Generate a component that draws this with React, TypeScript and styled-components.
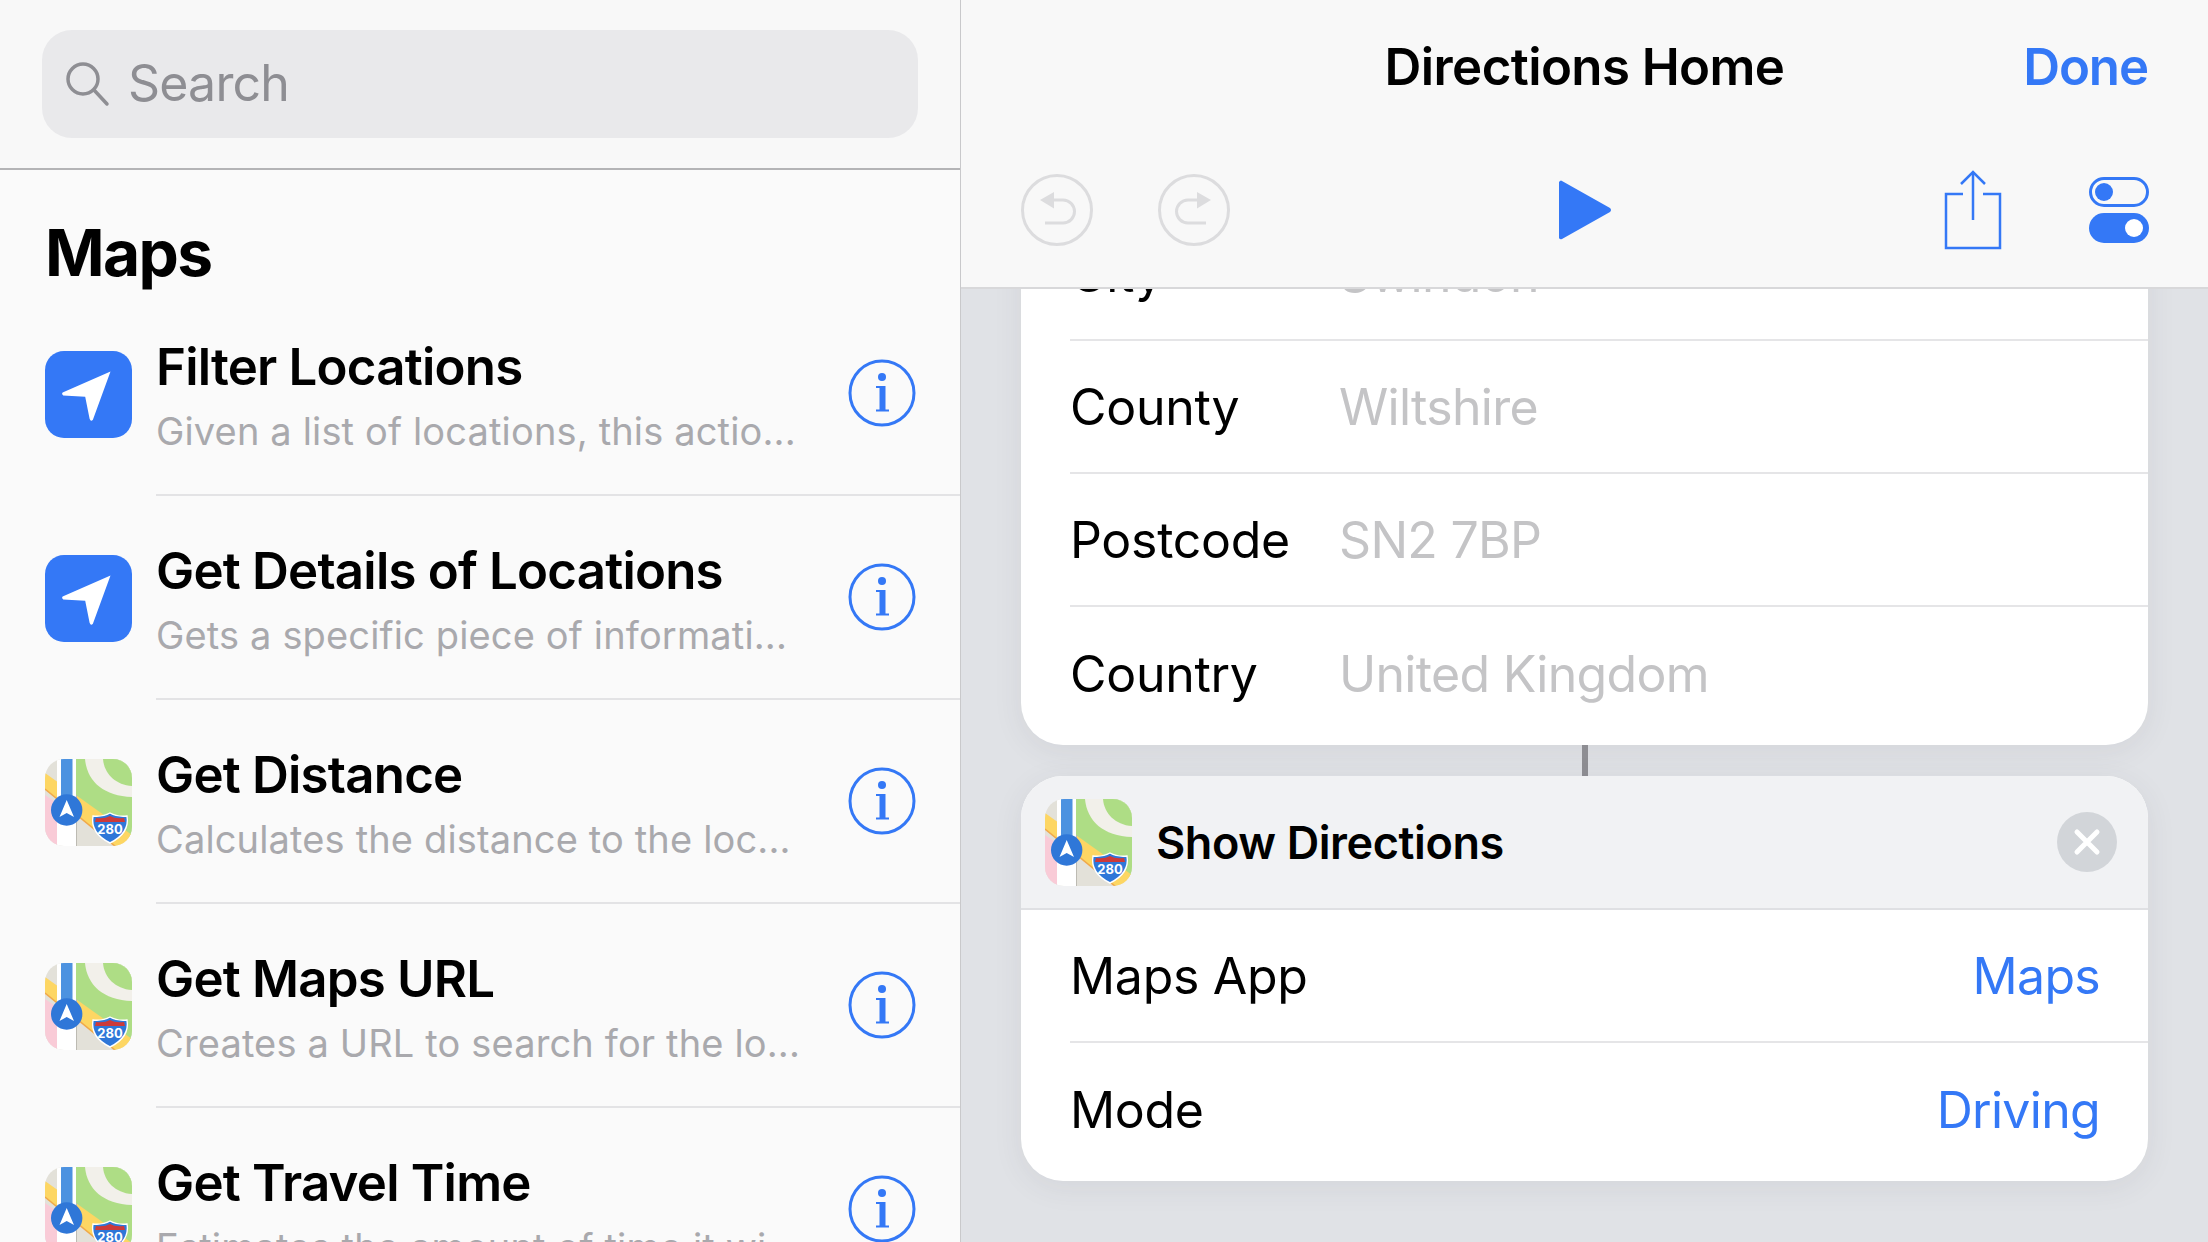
import React from 'react';
import styled, { createGlobalStyle } from 'styled-components';

const GlobalStyle = createGlobalStyle`
    html, body {
        margin: 0;
        padding: 0;
        background: #e0e2e6;
    }
    * {
        box-sizing: border-box;
    }
`;

const Screen = styled.div`
    width: 2208px;
    height: 1242px;
    display: flex;
    overflow: hidden;
    font-family: Inter, 'Liberation Sans', sans-serif;
    color: #000;
`;

const Sidebar = styled.div`
    width: 961px;
    height: 100%;
    flex: none;
    display: flex;
    flex-direction: column;
    background: #fafafa;
    border-right: 1px solid #c9c9cb;
    overflow: hidden;
`;

const SearchArea = styled.div`
    height: 170px;
    flex: none;
    padding: 30px 42px 0;
    background: #f8f8f8;
    border-bottom: 2px solid #b4b4b6;
`;

const SearchBar = styled.div`
    height: 108px;
    padding-left: 22px;
    display: flex;
    align-items: center;
    gap: 18px;
    background: #e9e9eb;
    border-radius: 30px;
`;

const SearchLabel = styled.span`
    padding-bottom: 3px;
    font-size: 50px;
    color: #8e8e93;
    letter-spacing: -0.8px;
`;

const SectionTitle = styled.h2`
    margin: 0;
    height: 122px;
    flex: none;
    padding: 47px 0 0 45px;
    font-size: 64px;
    line-height: 72px;
    font-weight: 700;
    letter-spacing: -1.6px;
`;

const ActionRow = styled.div`
    height: 204px;
    flex: none;
    padding-left: 45px;
    display: flex;
    align-items: center;
    gap: 24px;
`;

const ActionBody = styled.div`
    flex: 1;
    height: 100%;
    min-width: 0;
    padding-right: 44px;
    display: flex;
    align-items: center;
    justify-content: space-between;
    border-bottom: 2px solid #e3e3e5;
`;

const ActionText = styled.div`
    align-self: flex-start;
    padding-top: 42px;
`;

const ActionTitle = styled.div`
    font-size: 51px;
    line-height: 65px;
    font-weight: 600;
    letter-spacing: -0.8px;
    white-space: nowrap;
`;

const ActionSubtitle = styled.div`
    font-size: 38px;
    line-height: 64px;
    color: #a9a9ad;
    letter-spacing: 0.15px;
    white-space: nowrap;
`;

const IconTile = styled.div`
    width: 87px;
    height: 87px;
    flex: none;
    display: flex;
    align-items: center;
    justify-content: center;
    background: #3478f6;
    border-radius: 19px;
`;

const Detail = styled.div`
    flex: 1;
    height: 100%;
    display: flex;
    flex-direction: column;
    min-width: 0;
`;

const EditorHeader = styled.div`
    height: 289px;
    flex: none;
    position: relative;
    z-index: 1;
    background: #f8f8f8;
    border-bottom: 2px solid #d8d8da;
`;

const TitleBar = styled.div`
    height: 132px;
    padding: 0 60px;
    display: grid;
    grid-template-columns: 1fr auto 1fr;
    align-items: center;
`;

const EditorTitle = styled.div`
    font-size: 51px;
    font-weight: 600;
    letter-spacing: -0.6px;
`;

const DoneButton = styled.div`
    justify-self: end;
    font-size: 51px;
    font-weight: 600;
    color: #3478f6;
    letter-spacing: -1.1px;
`;

const Toolbar = styled.div`
    height: 155px;
    padding: 0 59px 0 60px;
    display: grid;
    grid-template-columns: 1fr auto 1fr;
    align-items: center;
`;

const ToolGroup = styled.div<{ $end?: boolean; $gap: number }>`
    display: flex;
    align-items: center;
    justify-content: ${(props) => (props.$end ? 'flex-end' : 'flex-start')};
    gap: ${(props) => props.$gap}px;
`;

const Canvas = styled.div`
    flex: 1;
    min-height: 0;
    padding: 0 60px;
    overflow: hidden;
    background: #e0e2e6;
`;

const Card = styled.div<{ $scrolled?: boolean }>`
    margin-top: ${(props) => (props.$scrolled ? '-81px' : '0')};
    background: #fff;
    border-radius: 42px;
    overflow: hidden;
    box-shadow: 0 6px 30px rgba(60, 64, 80, 0.08);
`;

const Connector = styled.div`
    width: 6px;
    height: 31px;
    margin: 0 auto;
    background: #8e8e93;
`;

const CardHeader = styled.div`
    height: 134px;
    padding: 0 31px 0 24px;
    display: flex;
    align-items: center;
    gap: 24px;
    background: #f1f2f4;
    border-bottom: 2px solid #dfe0e3;
`;

const CardTitle = styled.div`
    flex: 1;
    font-size: 45px;
    font-weight: 600;
    letter-spacing: -0.4px;
`;

const CloseButton = styled.div`
    width: 60px;
    height: 60px;
    display: flex;
    align-items: center;
    justify-content: center;
    background: #d2d5d9;
    border-radius: 50%;
`;

const FieldRow = styled.div<{ $last?: boolean }>`
    height: ${(props) => (props.$last ? 138 : 133)}px;
    margin-left: 49px;
    padding-right: 48px;
    display: flex;
    align-items: ${(props) => (props.$last ? 'flex-start' : 'center')};
    padding-top: ${(props) => (props.$last ? 37 : 0)}px;
    border-bottom: ${(props) => (props.$last ? 'none' : '2px solid #e5e5e7')};
`;

const FieldLabel = styled.div<{ $wide?: boolean }>`
    width: ${(props) => (props.$wide ? '269px' : 'auto')};
    flex: ${(props) => (props.$wide ? 'none' : '1')};
    font-size: 50px;
    line-height: 60px;
    letter-spacing: -0.3px;
`;

const FieldValue = styled.div<{ $accent?: boolean }>`
    font-size: 50px;
    line-height: 60px;
    letter-spacing: -0.7px;
    color: ${(props) => (props.$accent ? '#3478f6' : '#c4c4c6')};
`;

const SearchIcon = () => (
    <svg width="46" height="46" viewBox="0 0 46 46" fill="none" stroke="#8e8e93" strokeWidth="3.5" strokeLinecap="round">
        <circle cx="19" cy="18" r="15" />
        <path d="M30 29 L43 43" />
    </svg>
);

const LocationArrow = () => (
    <svg width="55" height="55" viewBox="0 0 50 50">
        <path d="M45 4 L29 48 Q27 50 26 47 L22 27 L2 26 Q0 24 2 23 Z" fill="#fff" />
    </svg>
);

const InfoIcon = () => (
    <svg width="68" height="68" viewBox="0 0 68 68" fill="#3478f6">
        <circle cx="34" cy="34" r="32" fill="none" stroke="#3478f6" strokeWidth="3" />
        <circle cx="34" cy="18" r="4" />
        <path d="M28 27 H37.5 V50.5 H41 V52.5 H28 V50.5 H31.5 V29 H28 Z" />
    </svg>
);

const MapsIcon = () => (
    <svg width="87" height="87" viewBox="0 0 87 87" style={{ flex: 'none' }}>
        <defs>
            <clipPath id="maps-tile">
                <rect width="87" height="87" rx="19" />
            </clipPath>
        </defs>
        <g clipPath="url(#maps-tile)">
            <rect width="87" height="87" fill="#e3e1d9" />
            <path d="M31 0 H87 V80 L31 37 Z" fill="#aedd85" />
            <path d="M40 0 C42 22 58 37 87 38 V0 Z" fill="#f2f0ea" />
            <path d="M58 0 C59 14 70 26 87 27 V0 Z" fill="#aedd85" />
            <path d="M0 14 L87 76 V92 H76 L0 30 Z" fill="#fdd663" />
            <path d="M0 30 L76 92" stroke="#f0a94a" strokeWidth="1.5" fill="none" />
            <path d="M0 36 L12 44 V87 H0 Z" fill="#f9cbd7" />
            <rect x="12" width="19" height="87" fill="#fff" />
            <rect x="31" y="36" width="1" height="51" fill="#bdbbb3" />
            <rect x="16" width="11.5" height="40" fill="#4c92e0" />
            <circle cx="21.7" cy="51" r="15.7" fill="#2f77d8" />
            <path d="M21.7 41 L29 58 L21.7 54 L14.5 58 Z" fill="#fff" />
            <path d="M48 57 Q58 58 65 54 Q72 58 82 57 Q85 74 65 84 Q45 74 48 57 Z" fill="#2f77d8" stroke="#fff" strokeWidth="1.4" />
            <path d="M51 59 Q60 60 65 57 Q70 60 79 59 L80 63 H50 Z" fill="#cc3a3a" />
            <text x="65" y="75" textAnchor="middle" fontSize="13" fontWeight="700" fill="#fff" fontFamily="Inter, sans-serif">
                280
            </text>
        </g>
    </svg>
);

const UndoIcon = ({ flip }: { flip?: boolean }) => (
    <svg width="72" height="72" viewBox="0 0 72 72" fill="none" stroke="#dcdcde" strokeWidth="3">
        <g transform={flip ? 'matrix(-1 0 0 1 72 0)' : undefined}>
            <circle cx="36" cy="36" r="34.5" />
            <path d="M28 26 H42 A11.5 11.5 0 0 1 42 49 H24" />
            <path d="M33 18 L19 26 L33 34.5 Z" fill="#dcdcde" stroke="none" />
        </g>
    </svg>
);

const PlayIcon = () => (
    <svg width="54" height="60" viewBox="0 0 54 60">
        <path d="M2 1 Q3 0 4 1 L52 28 Q54 30 52 32 L4 59 Q2 60 1 58 V2 Z" fill="#3478f6" />
    </svg>
);

const ShareIcon = () => (
    <svg width="58" height="80" viewBox="0 0 58 80" fill="none" stroke="#3478f6" strokeWidth="2.5">
        <path d="M19 24 H2 V78 H56 V24 H39" />
        <path d="M29 50 V2" />
        <path d="M17 14 L29 2 L41 14" />
    </svg>
);

const SettingsIcon = () => (
    <svg width="60" height="66" viewBox="0 0 60 66">
        <rect x="1.5" y="1.5" width="57" height="27" rx="13.5" fill="none" stroke="#3478f6" strokeWidth="3" />
        <circle cx="15" cy="15" r="9" fill="#3478f6" />
        <rect y="36" width="60" height="30" rx="15" fill="#3478f6" />
        <circle cx="45" cy="51" r="9" fill="#fff" />
    </svg>
);

const CloseIcon = () => (
    <svg width="30" height="30" viewBox="0 0 30 30" stroke="#fff" strokeWidth="5" strokeLinecap="round">
        <path d="M5 5 L25 25 M25 5 L5 25" />
    </svg>
);

const actions = [
    { title: 'Filter Locations', subtitle: 'Given a list of locations, this actio...', kind: 'location' },
    { title: 'Get Details of Locations', subtitle: 'Gets a specific piece of informati...', kind: 'location' },
    { title: 'Get Distance', subtitle: 'Calculates the distance to the loc...', kind: 'maps' },
    { title: 'Get Maps URL', subtitle: 'Creates a URL to search for the lo...', kind: 'maps' },
    { title: 'Get Travel Time', subtitle: 'Estimates the amount of time it wi...', kind: 'maps' },
];

const addressFields = [
    { label: 'City', value: 'Swindon' },
    { label: 'County', value: 'Wiltshire' },
    { label: 'Postcode', value: 'SN2 7BP' },
    { label: 'Country', value: 'United Kingdom' },
];

export default function App() {
    return (
        <Screen>
            <GlobalStyle />
            <Sidebar>
                <SearchArea>
                    <SearchBar>
                        <SearchIcon />
                        <SearchLabel>Search</SearchLabel>
                    </SearchBar>
                </SearchArea>
                <SectionTitle>Maps</SectionTitle>
                {actions.map((action) => (
                    <ActionRow key={action.title}>
                        {action.kind === 'location' ? (
                            <IconTile>
                                <LocationArrow />
                            </IconTile>
                        ) : (
                            <MapsIcon />
                        )}
                        <ActionBody>
                            <ActionText>
                                <ActionTitle>{action.title}</ActionTitle>
                                <ActionSubtitle>{action.subtitle}</ActionSubtitle>
                            </ActionText>
                            <InfoIcon />
                        </ActionBody>
                    </ActionRow>
                ))}
            </Sidebar>
            <Detail>
                <EditorHeader>
                    <TitleBar>
                        <span />
                        <EditorTitle>Directions Home</EditorTitle>
                        <DoneButton>Done</DoneButton>
                    </TitleBar>
                    <Toolbar>
                        <ToolGroup $gap={65}>
                            <UndoIcon />
                            <UndoIcon flip />
                        </ToolGroup>
                        <PlayIcon />
                        <ToolGroup $end $gap={87}>
                            <ShareIcon />
                            <SettingsIcon />
                        </ToolGroup>
                    </Toolbar>
                </EditorHeader>
                <Canvas>
                    <Card $scrolled>
                        {addressFields.map((field, index) => (
                            <FieldRow key={field.label} $last={index === addressFields.length - 1}>
                                <FieldLabel $wide>{field.label}</FieldLabel>
                                <FieldValue>{field.value}</FieldValue>
                            </FieldRow>
                        ))}
                    </Card>
                    <Connector />
                    <Card>
                        <CardHeader>
                            <MapsIcon />
                            <CardTitle>Show Directions</CardTitle>
                            <CloseButton>
                                <CloseIcon />
                            </CloseButton>
                        </CardHeader>
                        <FieldRow>
                            <FieldLabel>Maps App</FieldLabel>
                            <FieldValue $accent>Maps</FieldValue>
                        </FieldRow>
                        <FieldRow $last>
                            <FieldLabel>Mode</FieldLabel>
                            <FieldValue $accent>Driving</FieldValue>
                        </FieldRow>
                    </Card>
                </Canvas>
            </Detail>
        </Screen>
    );
}
